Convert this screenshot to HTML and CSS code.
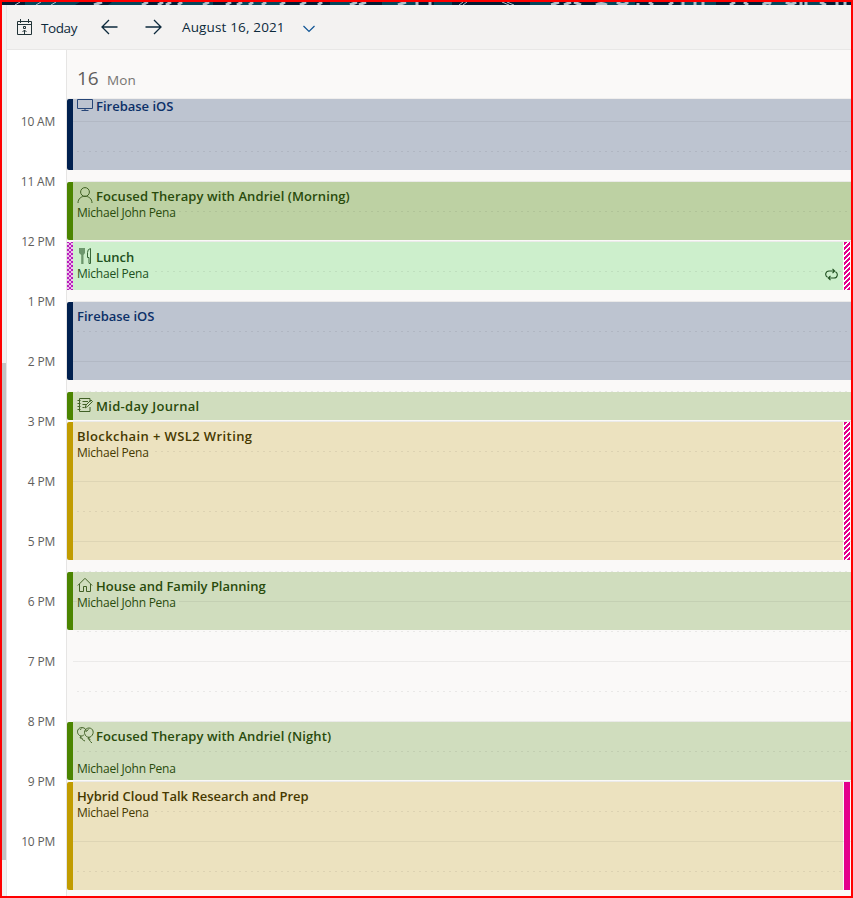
FILE: index.html
```html
<!DOCTYPE html>
<html lang="en">
<head>
<meta charset="utf-8">
<title>Calendar</title>
<link rel="stylesheet" href="styles.css">
</head>
<body>
<div class="frame">
  <svg class="banner" viewBox="2 2 849 3" preserveAspectRatio="none">
    <path fill="#031c34" d="M2 2h849v3H2z"/>
    <path fill="#06475c" d="M25 2h55l-5 3H25zM112 2h30v3h-34zM178 2h35v3h-35zM244 2h40v3h-46zM330 2h20v3h-20zM382 2h35v3h-35zM434 2h18v3h-18zM530 2h20v3h-20zM605 2h30v3h-30zM680 2h36v3h-36zM762 2h25v3h-25zM804 2h20v3h-20z"/>
    <path stroke="#aebfca" stroke-width="3" d="M94 5l8-3M142 5l6-3M158 5l5-3M166 5l5-3M178 5l4-3M203 5l6-3M226 5l5-3M237 5l5-3M249 5l4-3M262 5l4-3M280 5l5-3M300 5l6-3M318 5l4-3M350 5l7-3M359 5l7-3M398 5l8-3M417 2v3M430 2v3M551 5l8-3M564 5l7-3M574 2l7 3M596 5q5-3 11 0M617 2q6 5 11 0M638 5v-2M649 2l4 3M669 5l4-3M683 2v3M695 2v3M703 2v3M730 5l5-3M744 2l4 3M763 5q4-4 8-1M786 2q5 4 10 0M801 2v3M806 2v3M820 2l6 3M837 2v3M845 2v3"/>
    <path stroke="#aebfca" d="M459 5l4-3M463 5l4-3M502 2l7 3M507 2l7 3M15 5l5-3M36 5l5-3M51 5l5-3"/>
  </svg>
  <div class="window">
    <div class="scroll"><div class="thumb"></div></div>
    <div class="calendar">
      <header class="toolbar">
        <svg class="today-icon" width="17" height="17" viewBox="0 0 17 17"><path d="M1.5 2.5h14v13h-14zM1.5 5.5h14M4.500 0v4M12.500 0v4M8.500 16v-5M6.500 13l2-2 2 2M7.500 7.500h2v2h-2z"/></svg>
        <span class="today">Today</span>
        <svg class="prev" width="17" height="16" viewBox="0 0 17 16"><path d="M16.500 8H1M8 1L1 8l7 7"/></svg>
        <svg class="next" width="17" height="16" viewBox="0 0 17 16"><path d="M.5 8H16M9 1l7 7-7 7"/></svg>
        <span class="date">August 16, 2021</span>
        <svg class="chevron" width="12" height="8" viewBox="0 0 12 8"><path d="M.5 1L6 6.500 11.500 1"/></svg>
      </header>
      <div class="content">
        <div class="times">
          <span>10 AM</span><span>11 AM</span><span>12 PM</span><span>1 PM</span><span>2 PM</span><span>3 PM</span><span>4 PM</span><span>5 PM</span><span>6 PM</span><span>7 PM</span><span>8 PM</span><span>9 PM</span><span>10 PM</span>
        </div>
        <main class="day">
          <div class="day-head"><span class="num">16</span><span class="weekday">Mon</span></div>
          <div class="board">
            <div class="events">
              <article class="event blue h72 cut">
                <div class="title"><svg width="16" height="16" viewBox="0 0 16 16"><path d="M.5 1.500h15v9H.5zM8 10.500v2.500M4.500 12.500h7"/></svg><b>Firebase iOS</b></div>
              </article>
              <article class="event moss h59 gap">
                <div class="title"><svg width="16" height="16" viewBox="0 0 16 16"><circle cx="8" cy="5" r="4.400"/><path d="M1 16c0-9 14-9 14 0"/></svg><b class="loose">Focused Therapy with Andriel (Morning)</b></div>
                <div class="who"><span>Michael John Pena</span></div>
              </article>
              <article class="event mint h49 near striped">
                <div class="title"><svg width="16" height="16" viewBox="0 0 16 16"><path class="fill" d="M2 0h6v5L6.500 7v9H4.200V7L2 5z"/><path d="M13.500 .5v15H12v-6h-1.500v-5q0-3.500 3-4z"/></svg><b>Lunch</b></div>
                <div class="who"><span>Michael Pena</span></div>
                <svg class="repeat" width="13" height="13" viewBox="0 0 13 13"><path d="M2.500 9.300C-.5 7.500.5 3 4 3h5M7.500.8L9.700 3 7.500 5.200M10.500 3.700c3 1.800 2 6.300-1.500 6.300H4M5.500 7.800L3.300 10l2.200 2.200"/></svg>
              </article>
              <article class="event blue h79 gap"><div class="title"><b>Firebase iOS</b></div></article>
              <article class="event sage h29 gap">
                <div class="title"><svg width="16" height="16" viewBox="0 0 16 16"><path d="M13 5V1.500H2.500v13H13V10M.5 3.500h3M.5 6.500h3M.5 9.500h3M.5 12.500h3M5.500 4.500H11M5.500 7.500H9M5.500 10.500h2M8 11l1-3 5-5 1.500 1.500-5 5z"/></svg><b class="looser">Mid-day Journal</b></div>
              </article>
              <article class="event sand h139 near striped">
                <div class="title"><b class="loosest">Blockchain + WSL2 Writing</b></div>
                <div class="who"><span>Michael Pena</span></div>
              </article>
              <article class="event sage h59 gap">
                <div class="title"><svg width="16" height="16" viewBox="0 0 16 16"><path d="M.8 8.500L8 1.300l7.200 7.200M2.500 7v7.500h4v-5h3v5h4V7"/></svg><b>House and Family Planning</b></div>
                <div class="who"><span>Michael John Pena</span></div>
              </article>
              <article class="event sage h59 late">
                <div class="title"><svg class="balloons" width="17" height="16" viewBox="0 0 17 16"><path d="M5 .6C.5.600-.5 5 1.500 7.500 3 9.500 5 9.500 6.800 8M5 .6c3 0 4.500 2 4.200 4.400M4 9l-1 2h2c0 2 1 2 3 3M9.500 9.500C5.500 6 8 1 12 1s6 5 2 8.500c-1 1-3 1-4.500 0zM12 10l-1 2h2c-1 2 0 2 2 4M3 3q.5-1 1.500-1.200M10 4q.5-1.500 1.500-1.500"/></svg><b class="loose">Focused Therapy with Andriel (Night)</b></div>
                <div class="who low"><span>Michael John Pena</span></div>
              </article>
              <article class="event sand h109 near striped solid">
                <div class="title"><b>Hybrid Cloud Talk Research and Prep</b></div>
                <div class="who"><span>Michael Pena</span></div>
              </article>
            </div>
          </div>
        </main>
      </div>
    </div>
  </div>
</div>
</body>
</html>
```
FILE: styles.css
```css
* { box-sizing: border-box; }
body {
  margin: 0;
  font-family: "Open Sans", "Noto Sans", sans-serif;
  color: #0d2a3c;
}
svg { display: block; fill: none; stroke: currentColor; flex: none; }
.frame {
  width: 853px;
  height: 898px;
  border: 2px solid #f00;
  display: flex;
  flex-direction: column;
  overflow: hidden;
}
.banner { width: 849px; height: 3px; stroke: none; }
.window { flex: 1; display: flex; min-height: 0; }
.scroll { width: 4px; background: #f1f1f1; padding-top: 358px; }
.thumb { height: 497px; background: #c3c3c3; }
.calendar { flex: 1; border-left: 1px solid #e6e5e4; display: flex; flex-direction: column; min-width: 0; }
.toolbar {
  height: 45px;
  flex: none;
  background: #f3f2f1;
  border-bottom: 1px solid #e8e7e6;
  display: flex;
  align-items: center;
  padding-left: 9px;
  font-size: 13.5px;
  white-space: nowrap;
}
.today-icon { color: #223438; }
.today { width: 37px; margin: 2px 23px 0 8px; letter-spacing: -0.4px; }
.next { margin-left: 27px; }
.date { width: 103px; margin-left: 20px; letter-spacing: 0.15px; }
.prev, .next { stroke-width: 1.3; }
.chevron { margin-left: 18px; margin-top: 3px; color: #0f5494; stroke-width: 1.2; }
.content { flex: 1; display: flex; min-height: 0; }
.times {
  width: 60px;
  flex: none;
  background: #fff;
  border-right: 1px solid #e6e5e4;
  padding: 42px 11px 0 0;
  display: flex;
  flex-direction: column;
  text-align: right;
  font-size: 12px;
  letter-spacing: -0.2px;
  color: #605e5c;
}
.times span { height: 60px; line-height: 60px; flex: none; }
.day { flex: 1; background: #faf9f8; min-width: 0; }
.day-head {
  height: 49px;
  padding: 13px 0 0 10px;
  display: flex;
  align-items: baseline;
  line-height: 30px;
  color: #605e5c;
  border-bottom: 1px solid #efeeed;
}
.num { font-size: 19px; width: 30px; }
.weekday { font-size: 13.5px; letter-spacing: 0.1px; color: #767472; }
.board { height: 797px; position: relative; }
/* hour and half-hour rules, laid over the event fills */
.board::before, .board::after { content: ""; position: absolute; z-index: 1; pointer-events: none; }
.board::before {
  inset: 0 0 0 6px;
  background: repeating-linear-gradient(transparent 0 22px, rgba(0, 0, 0, .06) 22px 23px, transparent 23px 60px);
}
.board::after {
  inset: 52px 0 0 10px;
  background-image: linear-gradient(90deg, rgba(0, 0, 0, .065) 2px, transparent 2px);
  background-size: 6px 60px;
  -webkit-mask-image: repeating-linear-gradient(#000 0 1px, transparent 1px 60px);
  mask-image: repeating-linear-gradient(#000 0 1px, transparent 1px 60px);
}
.events { display: flex; flex-direction: column; }
.event {
  --strip: #4b8500;
  flex: none;
  padding: 4px 0 0 10px;
  background: linear-gradient(90deg, var(--strip) 6px, var(--fill) 6px);
  border-radius: 2px 0 0 2px;
  position: relative;
}
.blue { --strip: #00204f; --fill: #bdc4d0; color: #0c3068; }
.moss { --fill: #bdd1a3; color: #294b0c; }
.sage { --fill: #d0ddbe; color: #294b0c; }
.mint { --fill: #cdefcc; color: #205020; }
.sand { --strip: #c19c00; --fill: #ece2bf; color: #463900; }
.h72 { height: 71px; }
.h59 { height: 58px; }
.h49 { height: 48px; }
.h79 { height: 78px; }
.h29 { height: 28px; }
.h139 { height: 138px; }
.h109 { height: 108px; }
.gap { margin-top: 12px; }
.near { margin-top: 2px; }
.late { margin-top: 92px; }
.cut { padding-top: 0; }
.cut .title { height: 14px; }
.title { display: flex; align-items: center; height: 19px; font-size: 13px; white-space: nowrap; gap: 3px; margin-bottom: 1px; }
.title b { font-weight: 600; line-height: 14px; }
.title .loose { letter-spacing: 0.09px; }
.title .looser { letter-spacing: 0.3px; }
.title .loosest { letter-spacing: 0.4px; }
.title svg { margin-bottom: 1px; opacity: .85; }
.balloons { margin-right: -1px; }
.fill { fill: currentColor; stroke: none; opacity: .65; }
.who { font-size: 12px; line-height: 14px; height: 14px; letter-spacing: -0.24px; position: relative; z-index: 2; }
.who span { background: var(--fill); display: inline-block; padding-right: 3px; line-height: 14px; }
.low { margin-top: 17px; }
.striped { margin-right: 8px; }
.striped::after {
  content: "";
  position: absolute;
  z-index: 2;
  top: 0;
  bottom: 0;
  right: -7px;
  width: 6px;
  background: repeating-linear-gradient(135deg, #e3008c 0 2.3px, #fff 2.3px 3.54px);
}
.striped.solid::after { background: #e3008c; }
.mint { padding-top: 5px; background: var(--fill); }
.mint::before {
  content: "";
  position: absolute;
  left: 0;
  top: 0;
  bottom: 0;
  width: 6px;
  background:
    radial-gradient(circle, #b91cbe 1.2px, transparent 1.6px) 1px 0 / 4px 4px,
    radial-gradient(circle, #b91cbe 1.2px, transparent 1.6px) 3px 2px / 4px 4px,
    #f0d5ee;
}
.repeat { position: absolute; right: 5px; bottom: 9px; stroke-width: 1.1; z-index: 2; }
```
